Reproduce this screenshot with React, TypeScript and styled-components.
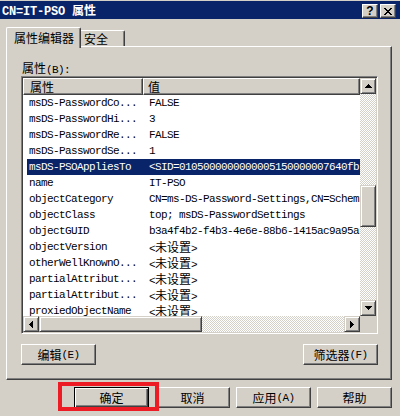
import React from "react";
import styled, { createGlobalStyle, css } from "styled-components";

const FACE = "#d4d0c8";
const SHADOW = "#808080";
const DARK = "#404040";
const NAVY = "#0a246a";

const GlobalStyle = createGlobalStyle`
  html, body { margin: 0; padding: 0; background: ${FACE}; }
  body {
    width: 400px; height: 416px; overflow: hidden;
    font-family: "Liberation Mono", "Noto Sans CJK SC", monospace;
    font-size: 11px; color: #000;
  }
  * { box-sizing: border-box; }
`;

const raised = css`
  border: 1px solid;
  border-color: #fff ${DARK} ${DARK} #fff;
  box-shadow: inset -1px -1px ${SHADOW};
  background: ${FACE};
`;

const scrollRaised = css`
  border: 1px solid;
  border-color: ${FACE} ${DARK} ${DARK} ${FACE};
  box-shadow: inset 1px 1px #fff, inset -1px -1px ${SHADOW};
  background: ${FACE};
`;

const Han = styled.span`
  font-family: "Noto Sans CJK SC", sans-serif;
  font-size: 12px;
  letter-spacing: 0;
`;

const Lat = styled.span`
  font-family: "Liberation Mono", monospace;
  font-size: 11px;
  letter-spacing: -0.6px;
`;

const HAN_RE = /([\u2E80-\u9FFF\uF900-\uFAFF\uFF00-\uFFEF]+)/;

function Mixed({ text }: { text: string }) {
  return (
    <>
      {text
        .split(HAN_RE)
        .filter(Boolean)
        .map((part, i) =>
          HAN_RE.test(part) ? <Han key={i}>{part}</Han> : <Lat key={i}>{part}</Lat>
        )}
    </>
  );
}

const Window = styled.div`
  width: 400px;
  height: 416px;
  padding-top: 1px;
  display: flex;
  flex-direction: column;
  background: ${FACE};
`;

const TitleBar = styled.div`
  height: 18px;
  flex-shrink: 0;
  background: ${NAVY};
  color: #fff;
  display: flex;
  padding: 0 4px 0 2px;
`;

const TitleText = styled.div`
  flex: 1;
  line-height: 18px;
  white-space: nowrap;
  font-weight: bold;
`;

const TitleLatin = styled.span`
  font-family: "Liberation Mono", monospace;
  font-size: 12px;
  letter-spacing: -0.2px;
  font-weight: bold;
`;

const TitleHan = styled.span`
  font-family: "Noto Sans CJK SC", sans-serif;
  font-size: 12px;
  font-weight: bold;
`;

const CaptionButton = styled.div`
  ${raised};
  width: 16px;
  height: 14px;
  margin-top: 3px;
  margin-left: 2px;
  display: flex;
  align-items: center;
  justify-content: center;
  color: #000;
  font-family: "Liberation Sans", sans-serif;
  font-weight: bold;
  font-size: 12px;
  line-height: 1;
`;

const TabStrip = styled.div`
  display: flex;
  align-items: flex-end;
  height: 19px;
  margin: 8px 0 0 6px;
  flex-shrink: 0;
`;

const Tab = styled.div<{ $active?: boolean }>`
  background: ${FACE};
  border-top: 1px solid #fff;
  border-right: 1px solid ${DARK};
  box-shadow: inset -1px 0 ${SHADOW};
  line-height: 14px;
  white-space: nowrap;
  ${(p) =>
    p.$active
      ? css`
          height: 21px;
          margin-bottom: -2px;
          position: relative;
          z-index: 1;
          border-left: 1px solid #fff;
          border-radius: 2px 2px 0 0;
          padding: 3px 6px 0 7px;
        `
      : css`
          height: 16px;
          padding: 1px 16px 0 3px;
          border-radius: 0 2px 0 0;
        `}
`;

const Panel = styled.div`
  height: 334px;
  margin: 0 8px 0 6px;
  border: 1px solid;
  border-color: #fff ${DARK} ${DARK} #fff;
  box-shadow: inset -1px -1px ${SHADOW};
  padding: 14px 13px 14px 14px;
  display: flex;
  flex-direction: column;
  flex-shrink: 0;
`;

const FieldLabel = styled.div`
  height: 14px;
  line-height: 14px;
  margin-bottom: 1px;
  padding-left: 1px;
`;

const ListBox = styled.div`
  height: 258px;
  border: 1px solid;
  border-color: ${SHADOW} #fff #fff ${SHADOW};
  box-shadow: inset 1px 1px ${DARK}, inset -1px -1px ${FACE};
  padding: 1px;
  display: grid;
  grid-template-columns: minmax(0, 1fr) 16px;
  grid-template-rows: minmax(0, 1fr) 16px;
  background: #fff;
`;

const Viewport = styled.div`
  overflow: hidden;
  background: #fff;
  min-width: 0;
`;

const Header = styled.div`
  display: flex;
  height: 17px;
`;

const HeaderCell = styled.div<{ $width?: number; $pad: number }>`
  ${raised};
  height: 17px;
  ${(p) => (p.$width ? `width: ${p.$width}px; flex-shrink: 0;` : "flex: 1;")}
  padding-left: ${(p) => p.$pad}px;
  display: flex;
  align-items: center;
  line-height: 14px;
`;

const Row = styled.div<{ $selected?: boolean }>`
  display: flex;
  height: 16px;
  margin-left: 4px;
  line-height: 16px;
  white-space: nowrap;
  background: ${(p) => (p.$selected ? NAVY : "transparent")};
  color: ${(p) => (p.$selected ? "#fff" : "#000")};
`;

const NameCell = styled.div`
  width: 116px;
  flex-shrink: 0;
  padding-left: 2px;
  overflow: hidden;
`;

const ValueCell = styled.div`
  flex: 1;
  min-width: 0;
  padding-left: 6px;
  overflow: hidden;
`;

const VScroll = styled.div`
  display: flex;
  flex-direction: column;
`;

const HScroll = styled.div`
  display: flex;
  flex-direction: row;
  min-width: 0;
`;

const ScrollButton = styled.div`
  ${scrollRaised};
  width: 16px;
  height: 16px;
  flex-shrink: 0;
  display: flex;
  align-items: center;
  justify-content: center;
`;

const Track = styled.div<{ $vertical?: boolean }>`
  flex: 1;
  display: flex;
  flex-direction: ${(p) => (p.$vertical ? "column" : "row")};
  background-color: #fff;
  background-image: repeating-conic-gradient(${FACE} 0 25%, #fff 0 50%);
  background-size: 2px 2px;
`;

const Thumb = styled.div<{ $vertical?: boolean; $offset: number; $size: number }>`
  ${scrollRaised};
  flex-shrink: 0;
  ${(p) =>
    p.$vertical
      ? `width: 16px; height: ${p.$size}px; margin-top: ${p.$offset}px;`
      : `height: 16px; width: ${p.$size}px; margin-left: ${p.$offset}px;`}
`;

const Corner = styled.div`
  background: ${FACE};
`;

const ActionRow = styled.div`
  display: flex;
  justify-content: space-between;
  margin-top: 10px;
`;

const PushButton = styled.div<{ $default?: boolean }>`
  width: 75px;
  height: 21px;
  display: flex;
  align-items: center;
  justify-content: center;
  line-height: 14px;
  white-space: nowrap;
  background: ${FACE};
  ${(p) =>
    p.$default
      ? css`
          border: 1px solid #000;
          box-shadow: inset 1px 1px #fff, inset -1px -1px ${DARK}, inset -2px -2px ${SHADOW};
        `
      : css`
          border: 1px solid;
          border-color: #fff ${DARK} ${DARK} #fff;
          box-shadow: inset -1px -1px ${SHADOW};
        `}
`;

const FooterRow = styled.div`
  display: flex;
  justify-content: flex-end;
  gap: 6px;
  margin-top: 7px;
  padding-right: 8px;
`;

const Annotated = styled.div`
  position: relative;
  &::after {
    content: "";
    position: absolute;
    top: -5px;
    left: -16px;
    right: -10px;
    bottom: -3px;
    border: 4px solid #ed1c24;
    pointer-events: none;
  }
`;

const ArrowSvg = styled.svg`
  display: block;
  shape-rendering: crispEdges;
`;

const ARROWS: Record<string, { w: number; h: number; d: string }> = {
  up: { w: 7, h: 4, d: "M3 0h1v1h-1z M2 1h3v1h-3z M1 2h5v1h-5z M0 3h7v1h-7z" },
  down: { w: 7, h: 4, d: "M0 0h7v1h-7z M1 1h5v1h-5z M2 2h3v1h-3z M3 3h1v1h-1z" },
  left: { w: 4, h: 7, d: "M3 0h1v7h-1z M2 1h1v5h-1z M1 2h1v3h-1z M0 3h1v1h-1z" },
  right: { w: 4, h: 7, d: "M0 0h1v7h-1z M1 1h1v5h-1z M2 2h1v3h-1z M3 3h1v1h-1z" },
};

function Arrow({ dir }: { dir: "up" | "down" | "left" | "right" }) {
  const a = ARROWS[dir];
  return (
    <ArrowSvg width={a.w} height={a.h} viewBox={`0 0 ${a.w} ${a.h}`}>
      <path d={a.d} fill="#000" />
    </ArrowSvg>
  );
}

function CloseGlyph() {
  return (
    <ArrowSvg width={8} height={7} viewBox="0 0 8 7">
      <path
        fill="#000"
        d="M0 0h2v1h-2z M6 0h2v1h-2z M1 1h2v1h-2z M5 1h2v1h-2z M2 2h4v1h-4z M3 3h2v1h-2z M2 4h4v1h-4z M1 5h2v1h-2z M5 5h2v1h-2z M0 6h2v1h-2z M6 6h2v1h-2z"
      />
    </ArrowSvg>
  );
}

const rows: { name: string; value: string; selected?: boolean }[] = [
  { name: "msDS-PasswordCo...", value: "FALSE" },
  { name: "msDS-PasswordHi...", value: "3" },
  { name: "msDS-PasswordRe...", value: "FALSE" },
  { name: "msDS-PasswordSe...", value: "1" },
  { name: "msDS-PSOAppliesTo", value: "<SID=0105000000000005150000007640fb", selected: true },
  { name: "name", value: "IT-PSO" },
  { name: "objectCategory", value: "CN=ms-DS-Password-Settings,CN=Schem" },
  { name: "objectClass", value: "top; msDS-PasswordSettings" },
  { name: "objectGUID", value: "b3a4f4b2-f4b3-4e6e-88b6-1415ac9a95a" },
  { name: "objectVersion", value: "<未设置>" },
  { name: "otherWellKnownO...", value: "<未设置>" },
  { name: "partialAttribut...", value: "<未设置>" },
  { name: "partialAttribut...", value: "<未设置>" },
  { name: "proxiedObjectName", value: "<未设置>" },
];

export default function App() {
  return (
    <>
      <GlobalStyle />
      <Window>
        <TitleBar>
          <TitleText>
            <TitleLatin>CN=IT-PSO </TitleLatin>
            <TitleHan>属性</TitleHan>
          </TitleText>
          <CaptionButton>?</CaptionButton>
          <CaptionButton>
            <CloseGlyph />
          </CaptionButton>
        </TitleBar>

        <TabStrip>
          <Tab $active>
            <Mixed text="属性编辑器" />
          </Tab>
          <Tab>
            <Mixed text="安全" />
          </Tab>
        </TabStrip>

        <Panel>
          <FieldLabel>
            <Mixed text="属性(B):" />
          </FieldLabel>
          <ListBox>
            <Viewport>
              <Header>
                <HeaderCell $width={120} $pad={6}>
                  <Mixed text="属性" />
                </HeaderCell>
                <HeaderCell $pad={4}>
                  <Mixed text="值" />
                </HeaderCell>
              </Header>
              {rows.map((r, i) => (
                <Row key={i} $selected={r.selected}>
                  <NameCell>
                    <Mixed text={r.name} />
                  </NameCell>
                  <ValueCell>
                    <Mixed text={r.value} />
                  </ValueCell>
                </Row>
              ))}
            </Viewport>
            <VScroll>
              <ScrollButton>
                <Arrow dir="up" />
              </ScrollButton>
              <Track $vertical>
                <Thumb $vertical $offset={91} $size={42} />
              </Track>
              <ScrollButton>
                <Arrow dir="down" />
              </ScrollButton>
            </VScroll>
            <HScroll>
              <ScrollButton>
                <Arrow dir="left" />
              </ScrollButton>
              <Track>
                <Thumb $offset={0} $size={163} />
              </Track>
              <ScrollButton>
                <Arrow dir="right" />
              </ScrollButton>
            </HScroll>
            <Corner />
          </ListBox>
          <ActionRow>
            <PushButton>
              <Mixed text="编辑(E)" />
            </PushButton>
            <PushButton>
              <Mixed text="筛选器(F)" />
            </PushButton>
          </ActionRow>
        </Panel>

        <FooterRow>
          <Annotated>
            <PushButton $default>
              <Mixed text="确定" />
            </PushButton>
          </Annotated>
          <PushButton>
            <Mixed text="取消" />
          </PushButton>
          <PushButton>
            <Mixed text="应用(A)" />
          </PushButton>
          <PushButton>
            <Mixed text="帮助" />
          </PushButton>
        </FooterRow>
      </Window>
    </>
  );
}
